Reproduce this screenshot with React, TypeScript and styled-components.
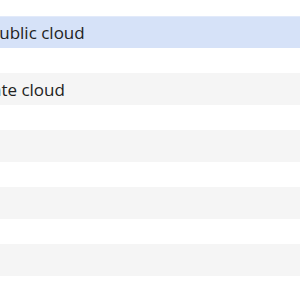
import React from 'react';
import styled, { createGlobalStyle } from 'styled-components';

const GlobalStyle = createGlobalStyle`
  html, body {
    margin: 0;
    padding: 0;
    background: #ffffff;
    overflow: hidden;
  }
`;

type Tone = 'selected' | 'plain' | 'alt';

interface Item {
  label: string;
  tone: Tone;
  offset: number;
}

// rows of the cloud list, scrolled a bit to the right
const items: Item[] = [
  { label: 'Public cloud', tone: 'selected', offset: -11 },
  { label: '', tone: 'plain', offset: 0 },
  { label: 'Private cloud', tone: 'alt', offset: -38 },
  { label: '', tone: 'plain', offset: 0 },
  { label: '', tone: 'alt', offset: 0 },
  { label: '', tone: 'plain', offset: 0 },
  { label: '', tone: 'alt', offset: 0 },
  { label: '', tone: 'plain', offset: 0 },
  { label: '', tone: 'alt', offset: 0 },
  { label: '', tone: 'plain', offset: 0 },
];

const ListPane = styled.div`
  width: 300px;
  height: 300px;
  overflow: hidden;
  padding-top: 16px;
  box-sizing: border-box;
  font-family: 'Open Sans', 'DejaVu Sans', sans-serif;
`;

const Row = styled.div<{ $tone: Tone }>`
  display: flex;
  align-items: center;
  white-space: nowrap;
  height: ${p => (p.$tone === 'plain' ? '25px' : '32px')};
  font-size: 17px;
  color: #222222;
  background: ${p =>
    p.$tone === 'selected' ? '#d6e2f8' : p.$tone === 'alt' ? '#f5f5f5' : '#ffffff'};
  border-top: ${p => (p.$tone === 'selected' ? '1px solid #e2eafa' : 'none')};
  box-sizing: border-box;
`;

const Label = styled.span`
  display: block;
`;

export default function App() {
  return (
    <>
      <GlobalStyle />
      <ListPane>
        {items.map((item, i) => (
          <Row key={i} $tone={item.tone}>
            <Label style={{ marginLeft: item.offset }}>{item.label}</Label>
          </Row>
        ))}
      </ListPane>
    </>
  );
}
